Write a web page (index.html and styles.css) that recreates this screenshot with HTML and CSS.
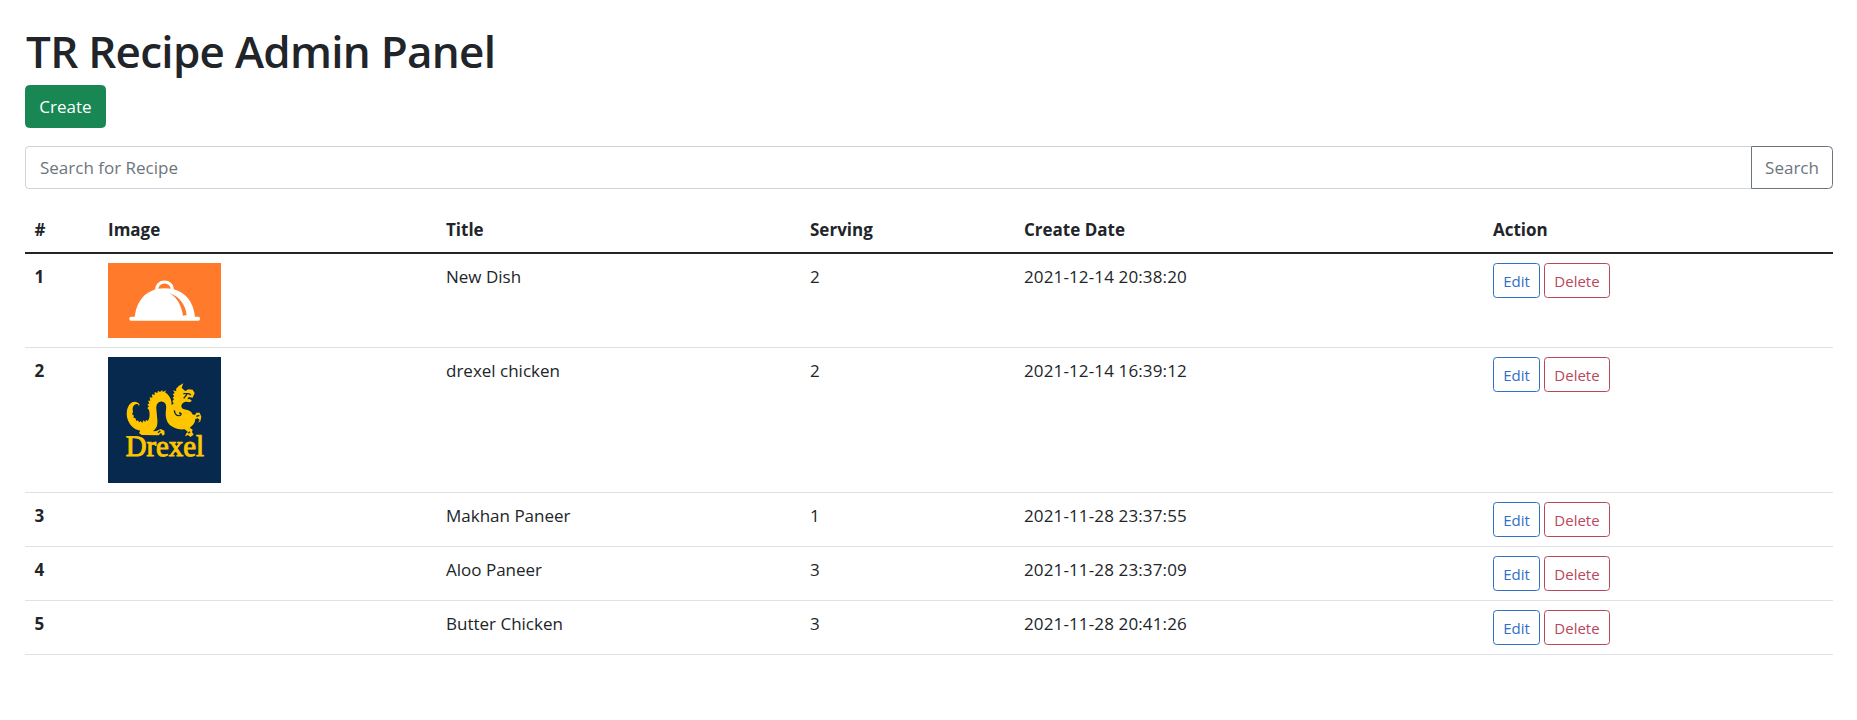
FILE: index.html
```html
<!DOCTYPE html>
<html lang="en">
<head>
<meta charset="utf-8">
<title>TR Recipe Admin Panel</title>
<link rel="stylesheet" href="styles.css">
</head>
<body>
<h1 class="page-title">TR Recipe Admin Panel</h1>
<button class="btn btn-create">Create</button>
<form class="search">
  <input class="search-input" type="text" placeholder="Search for Recipe">
  <button class="btn btn-search" type="button">Search</button>
</form>
<table class="table">
  <colgroup><col class="c-num"><col class="c-image"><col class="c-title"><col class="c-serving"><col class="c-date"><col class="c-action"></colgroup>
  <thead>
    <tr><th>#</th><th>Image</th><th>Title</th><th>Serving</th><th>Create Date</th><th>Action</th></tr>
  </thead>
  <tbody>
    <tr class="row-dish">
      <th>1</th>
      <td>
        <svg class="thumb thumb-dish" viewBox="54 39 339 225" preserveAspectRatio="none">
          <rect x="54" y="39" width="339" height="225" fill="#ff7b2b"/>
          <path d="M200 121C198 88 249 88 247 121" fill="none" stroke="#fff" stroke-width="9"/>
          <path d="M134 203C138 156 166 115 224 115C282 115 311 154 315 203Z" fill="#fff"/>
          <rect x="118" y="200" width="212" height="12" rx="5" fill="#fff"/>
          <path d="M240 130C262 144 274 166 279 197L290 195C287 168 272 142 240 130Z" fill="#ff7b2b"/>
        </svg>
      </td>
      <td>New Dish</td><td>2</td><td class="date">2021-12-14 20:38:20</td>
      <td><div class="actions"><button class="btn-sm edit">Edit</button><button class="btn-sm delete">Delete</button></div></td>
    </tr>
    <tr class="row-drexel">
      <th>2</th>
      <td>
        <svg class="thumb thumb-drexel" viewBox="24 21 339 378" preserveAspectRatio="none">
          <rect x="24" y="21" width="339" height="378" fill="#07294d"/>
          <path fill="#ffc600" d="M119 164C112 153 98 153 89 163C77 178 78 203 88 219C96 233 108 240 121 242L117 249L125 255L176 256L183 248L188 257L194 253L193 242L182 237L169 243L158 244C171 236 173 224 172 210L169 176C168 162 176 153 187 155C198 157 200 167 198 179C195 199 199 219 215 229C229 239 245 239 254 238L264 246L259 250L255 259L264 255L271 261L281 254L276 246L278 239L269 233C278 227 285 220 286 207L293 205L299 210L294 218L301 214L304 200L299 188L289 188L285 195L277 193C275 184 265 180 252 178C242 174 242 165 249 159C255 154 263 154 268 157L276 153L269 147L262 148L266 141L278 143L284 129L278 119L265 118L256 123L251 119L245 113L250 100L236 108L228 117L229 124L219 121L224 129L218 133L223 138L218 143L222 148L217 154L221 160L215 166C216 149 207 134 195 127L199 121L188 126L187 120L180 126L174 122L172 129L164 126L164 135L156 133L157 143L149 142L151 152L144 152L148 160L142 164L147 169L142 174L147 180C150 192 150 205 143 213L138 209L136 216L130 211L127 218L121 213L118 217L113 211L109 213L106 204L101 204L101 196L96 193L99 186C96 175 99 165 108 163C113 161 117 164 116 169Z"/>
          <g fill="none" stroke="#07294d" stroke-width="4">
            <path d="M223 181C224 194 231 199 240 196C246 193 244 189 237 189"/>
            <path d="M250 131L266 131L273 135M251 145L261 133"/>
            <path d="M174 248L181 242M265 250L270 245M289 199L298 196"/>
          </g>
          <text class="drexel-word" x="77" y="318" textLength="235" lengthAdjust="spacingAndGlyphs">Drexel</text>
        </svg>
      </td>
      <td>drexel chicken</td><td>2</td><td class="date">2021-12-14 16:39:12</td>
      <td><div class="actions"><button class="btn-sm edit">Edit</button><button class="btn-sm delete">Delete</button></div></td>
    </tr>
    <tr>
      <th>3</th><td></td><td>Makhan Paneer</td><td>1</td><td class="date">2021-11-28 23:37:55</td>
      <td><div class="actions"><button class="btn-sm edit">Edit</button><button class="btn-sm delete">Delete</button></div></td>
    </tr>
    <tr>
      <th>4</th><td></td><td>Aloo Paneer</td><td>3</td><td class="date">2021-11-28 23:37:09</td>
      <td><div class="actions"><button class="btn-sm edit">Edit</button><button class="btn-sm delete">Delete</button></div></td>
    </tr>
    <tr>
      <th>5</th><td></td><td>Butter Chicken</td><td>3</td><td class="date">2021-11-28 20:41:26</td>
      <td><div class="actions"><button class="btn-sm edit">Edit</button><button class="btn-sm delete">Delete</button></div></td>
    </tr>
  </tbody>
</table>
</body>
</html>
```
FILE: styles.css
```css
* { box-sizing: border-box; }
body {
  margin: 0;
  padding: 24px 24px 0 25px;
  background: #fff;
  color: #212529;
  font-family: "Segoe UI", "Open Sans", "Noto Sans", sans-serif;
  font-size: 17px;
  line-height: 27px;
}
button, input { font: inherit; }
.page-title {
  margin: 0 0 7px;
  padding-left: 1px;
  font-size: 44px;
  line-height: 54px;
  font-weight: 560;
  letter-spacing: -0.72px;
}
.btn {
  display: block;
  height: 43px;
  padding: 7px 0;
  border: 1px solid;
  border-radius: 4.5px;
}
.btn-create { width: 81px; background: #198754; border-color: #198754; color: #fff; }
.search { display: flex; margin: 18px 0; }
.search-input {
  flex: 1;
  height: 43px;
  padding: 7px 14px;
  border: 1px solid #ced4da;
  border-right: 0;
  border-radius: 4.5px 0 0 4.5px;
  color: #212529;
}
.search-input::placeholder { color: #6c757d; opacity: 1; }
.btn-search { width: 82px; background: #fff; border-color: #6c757d; color: #6c757d; border-radius: 0 4.5px 4.5px 0; }
.table { width: 100%; table-layout: fixed; border-collapse: separate; border-spacing: 0; }
.c-num { width: 74px; }
.c-image { width: 338px; }
.c-title { width: 364px; }
.c-serving { width: 214px; }
.c-date { width: 469px; }
th, td {
  padding: 9px;
  text-align: left;
  vertical-align: top;
  border-bottom: 1px solid #dee2e6;
}
th { font-weight: 700; font-size: 17px; }
th:first-child { padding-left: 9.5px; }
thead tr { height: 47px; }
thead th { border-bottom: 2px solid #212529; }
tbody tr { height: 54px; }
.row-dish { height: 94px; }
.row-drexel { height: 145px; }
.date { letter-spacing: 0.13px; }
.thumb { display: block; width: 113px; }
.thumb-dish { height: 75px; }
.thumb-drexel { height: 126px; }
.drexel-word {
  font-family: "Liberation Serif", serif;
  font-size: 90px;
  fill: #ffc600;
  stroke: #ffc600;
  stroke-width: 3px;
  text-rendering: geometricPrecision;
}
.actions { display: flex; gap: 4px; }
.btn-sm {
  height: 35px;
  padding: 5px 0 4px;
  border: 1px solid;
  border-radius: 3.6px;
  background: #fff;
  font-size: 15px;
  line-height: 24px;
}
.edit { width: 47px; color: #2f6fc6; }
.delete { width: 66px; color: #b9475a; }
```
